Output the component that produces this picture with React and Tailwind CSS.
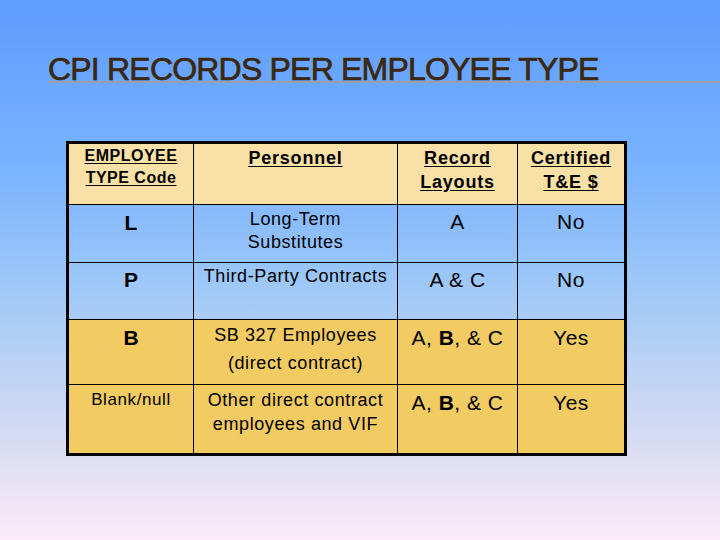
import React from 'react';

const rows = [
  {
    code: 'L',
    personnel: ['Long-Term', 'Substitutes'],
    layouts: 'A',
    certified: 'No',
    bg: '',
    pad: { code: 'pt-[6px]', pers: 'pt-[3px] leading-[23px]', rest: 'pt-[5px]' },
    h: 'h-[58px]',
  },
  {
    code: 'P',
    personnel: ['Third-Party Contracts'],
    layouts: 'A & C',
    certified: 'No',
    bg: '',
    pad: { code: 'pt-[5px]', pers: 'pt-[2px] leading-[23px]', rest: 'pt-[5px]' },
    h: 'h-[57px]',
  },
  {
    code: 'B',
    personnel: ['SB 327 Employees', '(direct contract)'],
    layouts: 'ABC',
    certified: 'Yes',
    bg: 'bg-[#f2cb62]',
    pad: { code: 'pt-[6px]', pers: 'pt-[1px] leading-[28px]', rest: 'pt-[6px]' },
    h: 'h-[65px]',
  },
  {
    code: 'Blank/null',
    personnel: ['Other direct contract', 'employees and VIF'],
    layouts: 'ABC',
    certified: 'Yes',
    bg: 'bg-[#f2cb62]',
    pad: { code: 'pt-[4px]', pers: 'pt-[3px] leading-[24px]', rest: 'pt-[6px]' },
    h: 'h-[70px]',
  },
];

const cell = 'border border-black align-top text-center p-0';

const Layouts = ({ value }) => {
  if (value === 'ABC') {
    return (
      <>
        A, <span className="font-bold">B</span>, &amp; C
      </>
    );
  }
  return value;
};

const App = () => {
  return (
    <div
      className="w-[720px] h-[540px] overflow-hidden bg-[linear-gradient(180deg,#5e9cff_0%,#78b2ff_30%,#a2caf7_55%,#d8dcf2_82%,#fcebf8_100%)]"
      style={{ fontFamily: '"Liberation Sans", Arial, sans-serif' }}
    >
      <div className="pt-[53px] pl-[48px]">
        <div className="h-[30px] border-b-2 border-[#9b9ea6]">
          <h1 className="text-[32px] leading-[33px] tracking-[-0.8px] text-[#3a2810] whitespace-nowrap [-webkit-text-stroke:0.7px_#3a2810]">
            CPI RECORDS PER EMPLOYEE TYPE
          </h1>
        </div>
      </div>

      <div className="pt-[58px] pl-[66px]">
        <table className="border-collapse border-[3px] border-black table-fixed text-black">
          <colgroup>
            <col className="w-[126px]" />
            <col className="w-[204px]" />
            <col className="w-[120px]" />
            <col className="w-[108px]" />
          </colgroup>
          <thead>
            <tr className="h-[62px] bg-[#f9e0a6]">
              <th className={`${cell} pt-[1px] text-[16px] leading-[22px] tracking-[0.5px] font-bold`}>
                <span className="underline underline-offset-2">EMPLOYEE</span>
                <br />
                <span className="underline underline-offset-2">TYPE Code</span>
              </th>
              <th className={`${cell} pt-[2px] text-[18px] leading-[24px] tracking-[0.8px] font-bold`}>
                <span className="underline underline-offset-2">Personnel</span>
              </th>
              <th className={`${cell} pt-[2px] text-[18px] leading-[24px] tracking-[0.8px] font-bold`}>
                <span className="underline underline-offset-2">Record</span>
                <br />
                <span className="underline underline-offset-2">Layouts</span>
              </th>
              <th className={`${cell} pt-[2px] text-[18px] leading-[24px] tracking-[0.8px] font-bold`}>
                <span className="underline underline-offset-2">Certified</span>
                <br />
                <span className="underline underline-offset-2">T&amp;E $</span>
              </th>
            </tr>
          </thead>
          <tbody>
            {rows.map((row) => (
              <tr key={row.code} className={`${row.h} ${row.bg}`}>
                <td
                  className={`${cell} ${row.pad.code} ${
                    row.code.length > 1
                      ? 'text-[17px] leading-[22px] tracking-[0.6px]'
                      : 'text-[21px] leading-[24px] font-bold'
                  }`}
                >
                  {row.code}
                </td>
                <td className={`${cell} ${row.pad.pers} text-[18px] tracking-[0.6px]`}>
                  {row.personnel.map((line, i) => (
                    <div key={i}>{line}</div>
                  ))}
                </td>
                <td className={`${cell} ${row.pad.rest} text-[21px] leading-[24px] tracking-[0.5px]`}>
                  <Layouts value={row.layouts} />
                </td>
                <td className={`${cell} ${row.pad.rest} text-[21px] leading-[24px] tracking-[0.5px]`}>
                  {row.certified}
                </td>
              </tr>
            ))}
          </tbody>
        </table>
      </div>
    </div>
  );
};

export default App;
